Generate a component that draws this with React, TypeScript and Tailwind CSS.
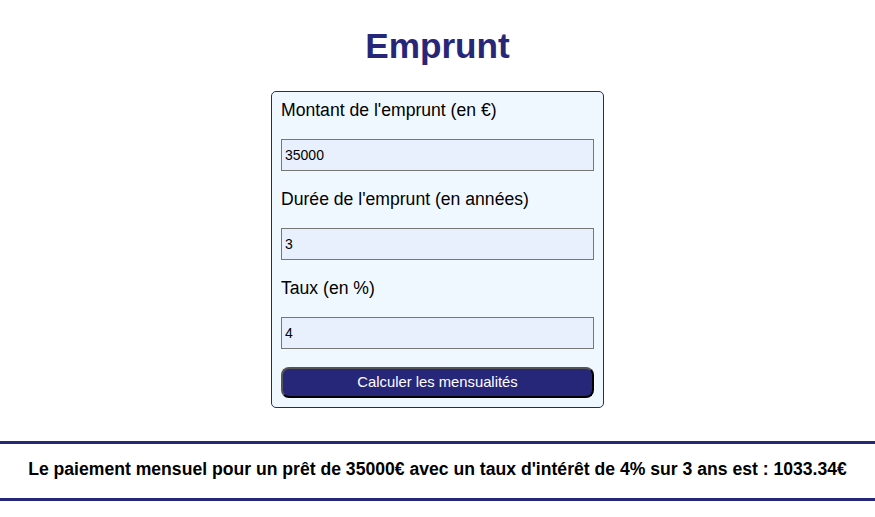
import React, { useState } from "react";

const font = { fontFamily: '"Liberation Sans", Arial, sans-serif' };

export default function App() {
  const [montant, setMontant] = useState("35000");
  const [duree, setDuree] = useState("3");
  const [taux, setTaux] = useState("4");

  return (
    <div className="min-h-screen bg-white text-black" style={font}>
      <h1 className="pt-[26px] text-center text-[35.2px] font-bold leading-[40px] text-[#27277a]">
        Emprunt
      </h1>
      <div className="mt-[25px] flex justify-center">
        <form
          onSubmit={(e) => e.preventDefault()}
          className="w-[333px] rounded-[5px] border border-[#27277a] bg-[#f0f8ff] px-[9px] pb-[9px] pt-[8px]"
        >
          <label className="block text-[17.6px] leading-[21px]">Montant de l'emprunt (en €)</label>
          <input
            value={montant}
            onChange={(e) => setMontant(e.target.value)}
            className="mt-[18px] mb-[18px] block h-[32px] w-full border border-[#767676] bg-[#e8f0fe] px-[3px] text-[14px] outline-none"
          />
          <label className="block text-[17.6px] leading-[21px]">Durée de l'emprunt (en années)</label>
          <input
            value={duree}
            onChange={(e) => setDuree(e.target.value)}
            className="mt-[18px] mb-[18px] block h-[32px] w-full border border-[#767676] bg-[#e8f0fe] px-[3px] text-[14px] outline-none"
          />
          <label className="block text-[17.6px] leading-[21px]">Taux (en %)</label>
          <input
            value={taux}
            onChange={(e) => setTaux(e.target.value)}
            className="mt-[18px] mb-[18px] block h-[32px] w-full border border-[#767676] bg-[#e8f0fe] px-[3px] text-[14px] outline-none"
          />
          <button
            type="submit"
            className="block h-[31px] w-full rounded-[8px] border-2 border-t-[#555] border-l-[#555] border-b-black border-r-black bg-[#27277a] text-[14.8px] text-white"
          >
            Calculer les mensualités
          </button>
        </form>
      </div>
      <div className="mt-[33px] border-y-[3px] border-[#27277a] pt-[15px] pb-[19px] text-center text-[17.6px] font-bold leading-[20px]">
        Le paiement mensuel pour un prêt de 35000€ avec un taux d'intérêt de 4% sur 3 ans est : 1033.34€
      </div>
    </div>
  );
}
